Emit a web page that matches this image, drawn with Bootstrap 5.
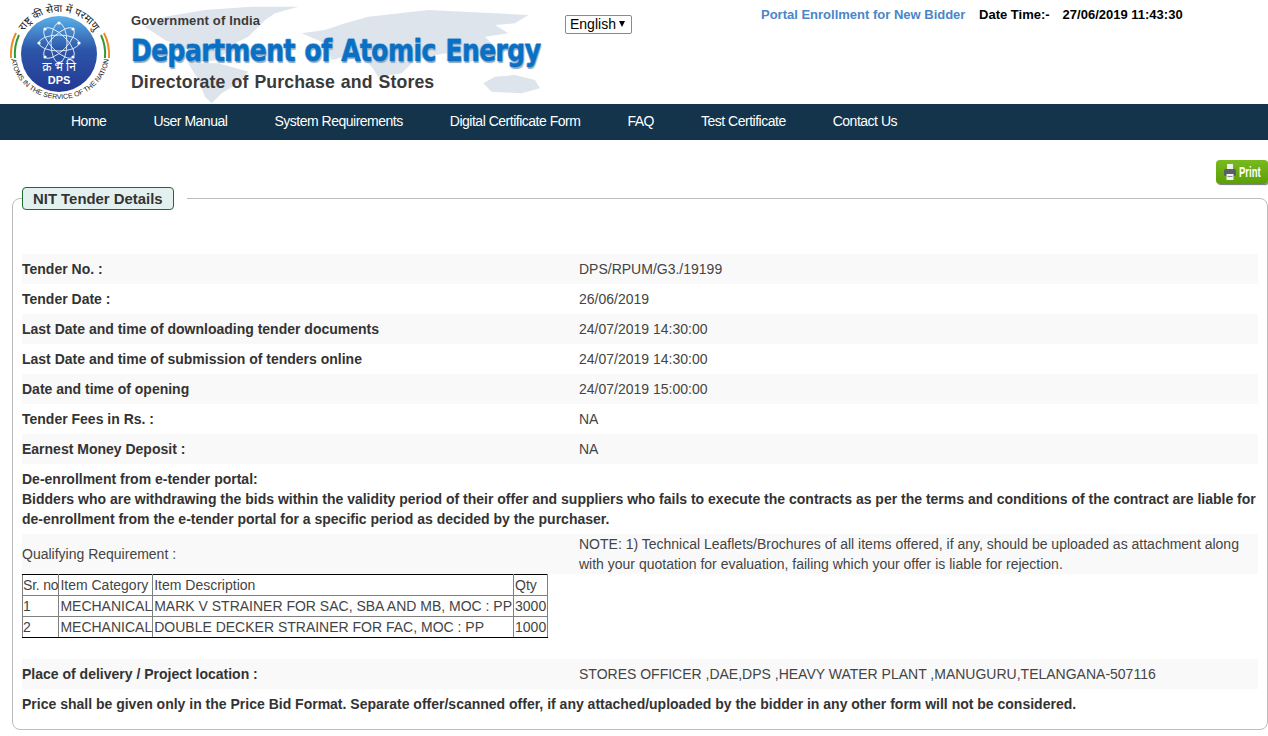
<!DOCTYPE html>
<html lang="en">
<head>
    <meta charset="UTF-8">
    <meta name="viewport" content="width=device-width, initial-scale=1.0">
    <title>NIT Tender Details</title>
    <link href="https://cdn.jsdelivr.net/npm/bootstrap@5.3.2/dist/css/bootstrap.min.css" rel="stylesheet">
    <style>
        body { font-family: "Liberation Sans", Arial, sans-serif; font-size: 14px; line-height: 20px; color: #444; overflow: hidden; }
        .site-top { height: 104px; position: relative; }
        .world-map { position: absolute; left: 125px; top: 0; }
        .dps-logo { margin-left: 10px; flex: 0 0 105px; }
        .brand-box { position: relative; margin-left: 16px; width: 434px; padding-top: 12px; }
        .brand-gov { font: bold 13px/18px "Liberation Sans", sans-serif; color: #3b3b3b; letter-spacing: .15px; }
        .brand-dept { font: bold 30px/36px "DejaVu Sans", sans-serif; color: #0a70c4; white-space: nowrap; letter-spacing: -.75px; word-spacing: 2px;
            -webkit-text-stroke: .4px #0a66b4; text-shadow: 1px 0 0 #a4cdee, -1px 0 0 #a4cdee, 0 -1px 0 #a4cdee, 1px 2px 1px #8fa9c0;
            margin-top: 3px; transform: scaleX(.836); transform-origin: left center; }
        .brand-dir { font: bold 17.7px/22px "Liberation Sans", sans-serif; color: #3a3a3a; letter-spacing: .1px; word-spacing: 1px; margin-top: 2px; white-space: nowrap; }
        .lang-box { position: relative; margin-top: 15px; flex: 0 0 67px; height: 19px; }
        .lang-box::after { content: ""; position: absolute; right: 7px; top: 6px; border-left: 3.5px solid transparent; border-right: 3.5px solid transparent; border-top: 6px solid #000; pointer-events: none; }
        .lang-pick { appearance: none; display: block; background: #fff; width: 67px; height: 19px; border: 1px solid #8a8a8a; border-radius: 2px; font: 14px/17px "Liberation Sans", sans-serif; color: #000; padding: 0 0 0 4px; }
        .top-info { position: relative; margin-left: 129px; margin-top: 5px; font-size: 13px; font-weight: bold; color: #000; white-space: nowrap; }
        .top-info a { color: #4a86c8; text-decoration: none; margin-right: 10px; }
        .top-info span + span { margin-left: 13px; }
        .main-bar { background: #13344a; height: 36px; padding-left: 71px; gap: 47px; }
        .main-bar a { color: #fff; text-decoration: none; font-size: 14px; line-height: 35px; letter-spacing: -.49px; }
        .print-wrap { padding-top: 20px; height: 44px; margin-bottom: 3px; }
        .print-btn { width: 52px; height: 24px; background: linear-gradient(#78b91e, #5c9f08); border-radius: 4px; box-shadow: 1px 1px 1px #777; color: #fff; gap: 3px; padding-left: 8px; }
        .print-btn b { font-size: 14px; display: inline-block; transform: scaleX(.68); transform-origin: left; }
        .nit-box { margin: 0 0 0 12px; border: 1px solid #bdbdbd; border-radius: 8px; padding: 0 9px 10px; min-width: 0; }
        .nit-box legend { float: none; width: auto; margin: 0 0 44px; padding: 0 13px 0 0; font-size: 14.9px; line-height: 22px; }
        .legend-tag { display: block; height: 23px; padding: 0 10px; background: #e3f0f0; border: 1px solid #1f6b2c; border-radius: 4px; font-weight: bold; color: #333; }
        .info-line { min-height: 30px; align-items: center; }
        .info-line.shade { background: #f9f9f9; }
        .info-label { flex: 0 0 557px; font-weight: bold; color: #333; }
        .info-value { flex: 1; }
        .notice-text { font-weight: bold; color: #333; padding: 5px 0 5px; }
        .req-line { height: 40px; background: #f9f9f9; }
        .req-label { flex: 0 0 557px; align-self: center; }
        .req-table { border-collapse: collapse; border: 1px solid #000; margin-bottom: 21px; color: #444; }
        .req-table td { border: 1px solid #808080; padding: 0 1px; white-space: nowrap; }
        .req-table td:first-child { padding: 0; letter-spacing: -.2px; }
        .req-table td:nth-child(2) { padding-right: 0; }
        .req-table tr:first-child td { border-top-color: #000; }
        .req-table tr:last-child td { border-bottom-color: #000; }
    </style>
</head>
<body>
    <!-- Header -->
    <div class="site-top d-flex align-items-start">
        <svg class="world-map" width="430" height="104" viewBox="0 0 1290 312">
            <g fill="#dde4ec">
                <path d="M60 80 L120 50 L240 30 L380 20 L520 20 L450 40 L420 60 L370 110 L330 130 L280 180 L200 190 L190 150 L120 120z"/>
                <path d="M190 190 L280 190 L370 215 L340 250 L290 280 L260 310 L240 290 L220 240z"/>
                <path d="M530 100 L600 90 L660 70 L730 50 L910 30 L1210 45 L1170 70 L1110 75 L1150 100 L1080 110 L1110 140 L1030 190 L1010 170 L960 160 L910 170 L870 180 L830 220 L760 230 L740 200 L700 160 L620 180 L600 130z"/>
                <path d="M1075 250 L1110 230 L1170 225 L1230 240 L1245 265 L1190 280 L1100 275z"/>
            </g>
        </svg>
        <svg class="dps-logo" width="105" height="104" viewBox="0 0 105 104">
            <defs>
                <path id="arcTop" d="M7 54 A42 42 0 0 1 91 54"/>
                <path id="arcBot" d="M1 54 A49 45 0 0 0 99 54"/>
                <linearGradient id="discFill" x1="0" y1="0" x2="0" y2="1">
                    <stop offset="0" stop-color="#5ab0e8"/><stop offset=".45" stop-color="#2c55a8"/><stop offset="1" stop-color="#243a94"/>
                </linearGradient>
            </defs>
            <circle cx="49" cy="54" r="38" fill="url(#discFill)"/>
            <path d="M1 58 A49 49 0 0 1 6 33" fill="none" stroke="#f08a24" stroke-width="2"/>
            <path d="M5 58 A45 45 0 0 1 9 35" fill="none" stroke="#2f9a3a" stroke-width="2"/>
            <path d="M99 58 A49 49 0 0 0 94 33" fill="none" stroke="#f08a24" stroke-width="2"/>
            <path d="M95 58 A45 45 0 0 0 91 35" fill="none" stroke="#2f9a3a" stroke-width="2"/>
            <g fill="none" stroke="#e6f2fb" stroke-width=".9">
                <ellipse cx="49" cy="43" rx="8" ry="20"/>
                <ellipse cx="49" cy="43" rx="8" ry="20" transform="rotate(45 49 43)"/>
                <ellipse cx="49" cy="43" rx="8" ry="20" transform="rotate(90 49 43)"/>
                <ellipse cx="49" cy="43" rx="8" ry="20" transform="rotate(135 49 43)"/>
            </g>
            <g fill="#fff">
                <circle cx="49" cy="23" r="1.6"/><circle cx="49" cy="63" r="1.6"/><circle cx="29" cy="43" r="1.6"/><circle cx="69" cy="43" r="1.6"/>
                <circle cx="35" cy="29" r="1.6"/><circle cx="63" cy="29" r="1.6"/><circle cx="35" cy="57" r="1.6"/><circle cx="63" cy="57" r="1.6"/>
            </g>
            <text font-family="'Noto Sans','Noto Sans Devanagari',sans-serif" font-size="10.5" fill="#222"><textPath href="#arcTop" startOffset="50%" text-anchor="middle">राष्ट्र की सेवा में परमाणु</textPath></text>
            <text x="49" y="71" text-anchor="middle" font-family="'Noto Sans',sans-serif" font-size="12" fill="#fff">क्र भं नि</text>
            <text x="49" y="84" text-anchor="middle" font-family="'Liberation Sans',sans-serif" font-weight="bold" font-size="11" fill="#fff">DPS</text>
            <text font-family="'Liberation Sans',sans-serif" font-size="7" fill="#222"><textPath href="#arcBot" startOffset="50%" text-anchor="middle">ATOMS IN THE SERVICE OF THE NATION</textPath></text>
        </svg>
        <div class="brand-box">
            <div class="brand-gov">Government of India</div>
            <div class="brand-dept">Department of Atomic Energy</div>
            <div class="brand-dir">Directorate of Purchase and Stores</div>
        </div>
        <div class="lang-box">
            <select class="lang-pick"><option>English</option></select>
        </div>
        <div class="top-info">
            <a href="#">Portal Enrollment for New Bidder</a>
            <span>Date Time:-</span><span>27/06/2019 11:43:30</span>
        </div>
    </div>

    <!-- Navbar -->
    <nav class="main-bar d-flex">
        <a href="#">Home</a>
        <a href="#">User Manual</a>
        <a href="#">System Requirements</a>
        <a href="#">Digital Certificate Form</a>
        <a href="#">FAQ</a>
        <a href="#">Test Certificate</a>
        <a href="#">Contact Us</a>
    </nav>

    <div class="print-wrap d-flex justify-content-end">
        <div class="print-btn d-flex align-items-center">
            <svg class="flex-shrink-0" width="12" height="16" viewBox="0 0 12 16">
                <rect x="3" y="0" width="6" height="6" fill="#eef0ee"/>
                <rect x="0" y="5" width="12" height="7" rx="1.5" fill="#5a5f62"/>
                <rect x="2.5" y="10" width="7" height="6" fill="#f2f2f2"/>
                <rect x="3.5" y="12" width="5" height="1" fill="#8a8f92"/>
            </svg>
            <b>Print</b>
        </div>
    </div>

    <!-- Tender details -->
    <fieldset class="nit-box">
        <legend><span class="legend-tag">NIT Tender Details</span></legend>
        <div class="info-line shade d-flex"><div class="info-label">Tender No. :</div><div class="info-value">DPS/RPUM/G3./19199</div></div>
        <div class="info-line d-flex"><div class="info-label">Tender Date :</div><div class="info-value">26/06/2019</div></div>
        <div class="info-line shade d-flex"><div class="info-label">Last Date and time of downloading tender documents</div><div class="info-value">24/07/2019 14:30:00</div></div>
        <div class="info-line d-flex"><div class="info-label">Last Date and time of submission of tenders online</div><div class="info-value">24/07/2019 14:30:00</div></div>
        <div class="info-line shade d-flex"><div class="info-label">Date and time of opening</div><div class="info-value">24/07/2019 15:00:00</div></div>
        <div class="info-line d-flex"><div class="info-label">Tender Fees in Rs. :</div><div class="info-value">NA</div></div>
        <div class="info-line shade d-flex"><div class="info-label">Earnest Money Deposit :</div><div class="info-value">NA</div></div>
        <div class="notice-text">De-enrollment from e-tender portal:<br>Bidders who are withdrawing the bids within the validity period of their offer and suppliers who fails to execute the contracts as per the terms and conditions of the contract are liable for de-enrollment from the e-tender portal for a specific period as decided by the purchaser.</div>
        <div class="req-line d-flex">
            <div class="req-label">Qualifying Requirement :</div>
            <div class="info-value">NOTE: 1) Technical Leaflets/Brochures of all items offered, if any, should be uploaded as attachment along with your quotation for evaluation, failing which your offer is liable for rejection.</div>
        </div>
        <table class="req-table">
            <tr><td>Sr. no</td><td>Item Category</td><td>Item Description</td><td>Qty</td></tr>
            <tr><td>1</td><td>MECHANICAL</td><td>MARK V STRAINER FOR SAC, SBA AND MB, MOC : PP</td><td>3000</td></tr>
            <tr><td>2</td><td>MECHANICAL</td><td>DOUBLE DECKER STRAINER FOR FAC, MOC : PP</td><td>1000</td></tr>
        </table>
        <div class="info-line shade d-flex"><div class="info-label">Place of delivery / Project location :</div><div class="info-value">STORES OFFICER ,DAE,DPS ,HEAVY WATER PLANT ,MANUGURU,TELANGANA-507116</div></div>
        <div class="info-line d-flex"><div class="info-label flex-fill">Price shall be given only in the Price Bid Format. Separate offer/scanned offer, if any attached/uploaded by the bidder in any other form will not be considered.</div></div>
    </fieldset>
    <script src="https://cdn.jsdelivr.net/npm/bootstrap@5.3.2/dist/js/bootstrap.bundle.min.js"></script>
</body>
</html>
